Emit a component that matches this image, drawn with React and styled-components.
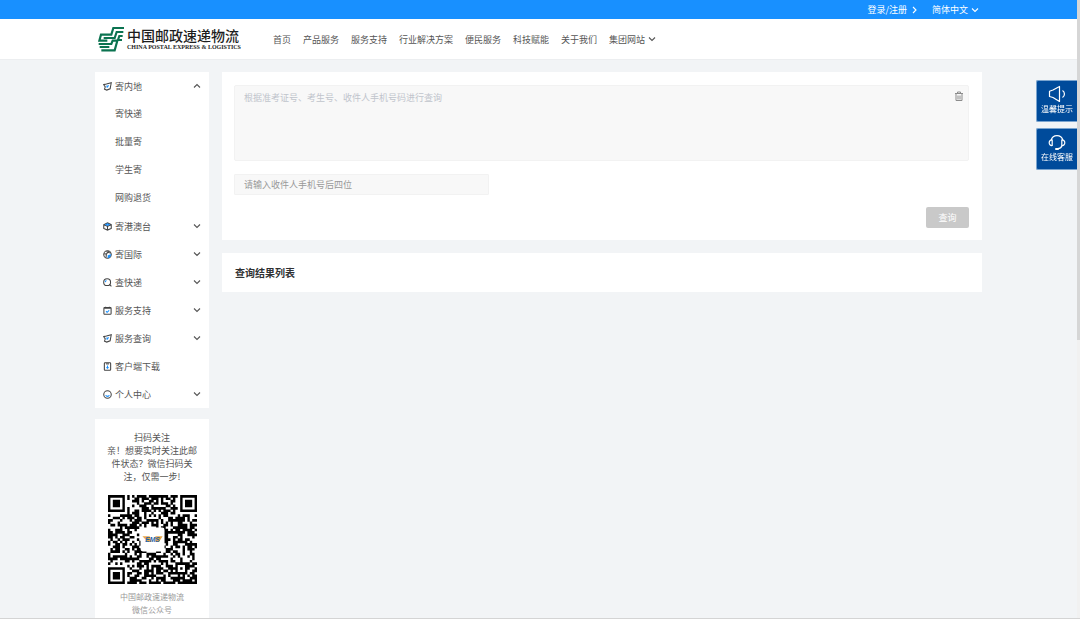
import React, { useState } from "react";
import styled, { createGlobalStyle } from "styled-components";

const GlobalStyle = createGlobalStyle`
    * {
        box-sizing: border-box;
    }

    body {
        margin: 0;
        background-color: #f2f4f6;
        color: #555;
        font-family: "Noto Sans CJK SC", "Liberation Sans", sans-serif;
        font-size: 9px;
        overflow: hidden;
    }

    a {
        color: inherit;
        text-decoration: none;
    }

    button, input, textarea {
        font-family: inherit;
        font-size: 9px;
        margin: 0;
        padding: 0;
        border: none;
    }

    ul {
        list-style: none;
        margin: 0;
        padding: 0;
    }
`;

const Page = styled.div`
    height: 100vh;
    padding-right: 3px;
    overflow: hidden;
`;

const TopBar = styled.div`
    display: flex;
    justify-content: flex-end;
    align-items: center;
    gap: 14px;
    height: 19px;
    padding: 0 98px;
    background-color: #1890ff;
    color: #fff;
`;

const TopLink = styled.a`
    display: flex;
    align-items: center;
    gap: 3px;
`;

const LangButton = styled.button`
    display: flex;
    align-items: center;
    gap: 3px;
    background: none;
    color: #fff;
`;

const Header = styled.header`
    display: flex;
    align-items: center;
    height: 41px;
    padding: 0 98px;
    background-color: #fff;
    border-bottom: 1px solid #eceef0;
`;

const Brand = styled.a`
    display: flex;
    align-items: center;
    gap: 3px;
    width: 175px;
`;

const BrandText = styled.span`
    display: flex;
    flex-direction: column;
    color: #1d1d1d;
    white-space: nowrap;
`;

const BrandName = styled.span`
    display: flex;
    justify-content: space-between;
    font-size: 14px;
    font-weight: 500;
    line-height: 17px;
`;

const BrandSub = styled.span`
    font-family: "Liberation Serif", serif;
    font-size: 6px;
    font-weight: bold;
    line-height: 7px;
`;

const Nav = styled.nav`
    display: flex;
    gap: 12px;
`;

const NavLink = styled.a`
    display: flex;
    align-items: center;
    gap: 3px;
    white-space: nowrap;
`;

const Content = styled.div`
    display: flex;
    align-items: flex-start;
    gap: 13px;
    padding: 12px 95px;
`;

const Sidebar = styled.aside`
    display: flex;
    flex-direction: column;
    flex: 0 0 114px;
    gap: 11px;
`;

const Card = styled.section`
    background-color: #fff;
`;

const MenuRow = styled.button`
    display: flex;
    align-items: center;
    gap: 3px;
    width: 100%;
    height: 28px;
    padding: 0 8px;
    background: none;
    color: #555;
    text-align: left;
`;

const MenuLabel = styled.span`
    flex: 1;
`;

const SubLink = styled.a`
    display: block;
    height: 28px;
    padding-left: 20px;
    line-height: 28px;
`;

const ScanCard = styled(Card)`
    display: flex;
    flex-direction: column;
    align-items: center;
    padding: 12px;
    text-align: center;
`;

const ScanText = styled.p`
    margin: 0 0 12px;
    line-height: 13px;
`;

const ScanCaption = styled.p`
    margin: 6px 0 0;
    color: #999;
    font-size: 8px;
    line-height: 13px;
`;

const Main = styled.main`
    display: flex;
    flex-direction: column;
    flex: 1;
    gap: 13px;
    min-width: 0;
`;

const SearchForm = styled.form`
    display: flex;
    flex-direction: column;
    align-items: flex-start;
    padding: 13px 13px 12px 12px;
    background-color: #fff;
`;

const NumberBox = styled.div`
    display: flex;
    align-items: flex-start;
    width: 100%;
    height: 76px;
    padding: 5px 4px 5px 9px;
    background-color: #f8f8f8;
    border: 1px solid #f2f2f2;
    border-radius: 2px;
`;

const NumberArea = styled.textarea`
    flex: 1;
    height: 100%;
    background: none;
    outline: none;
    resize: none;
    line-height: 14px;

    &::placeholder {
        color: #c0c4cc;
    }
`;

const ClearButton = styled.button`
    display: flex;
    background: none;
    color: #8c8c8c;
`;

const PhoneInput = styled.input`
    width: 255px;
    height: 21px;
    margin: 13px 0 12px;
    padding: 0 9px;
    background-color: #f8f8f8;
    border: 1px solid #f2f2f2;
    border-radius: 1px;
    outline: none;

    &::placeholder {
        color: #999;
    }
`;

const QueryButton = styled.button`
    align-self: flex-end;
    width: 43px;
    height: 21px;
    border-radius: 2px;
    background-color: #c9c9c9;
    color: #fff;
`;

const ResultTitle = styled.h2`
    margin: 0;
    padding: 0 13px;
    color: #303133;
    font-size: 10px;
    font-weight: bold;
    line-height: 39px;
`;

const FloatBar = styled.div`
    position: fixed;
    top: 80px;
    right: 3px;
    display: flex;
    flex-direction: column;
    gap: 6px;
`;

const FloatButton = styled.button`
    display: flex;
    flex-direction: column;
    align-items: center;
    width: 41px;
    height: 42px;
    padding-top: 4px;
    background-color: #004b9b;
    border: 1px solid #7aa4cf;
    border-right: none;
    border-radius: 2px 0 0 2px;
    color: #fff;
    font-size: 8px;
    line-height: 12px;
`;

const ScrollRail = styled.div`
    position: fixed;
    top: 0;
    right: 0;
    bottom: 0;
    width: 3px;
    background-color: #f1f1f1;
`;

const ScrollThumb = styled.div`
    height: 55%;
    background-color: #d6d6d6;
`;

const BottomEdge = styled.div`
    position: fixed;
    left: 0;
    right: 0;
    bottom: 0;
    height: 1px;
    background-color: #d4d4d4;
`;

const arrows = {
    down: "M1 2.500l3 3 3-3",
    up: "M1 5.500l3-3 3 3",
    right: "M3 1l3 3-3 3",
};

const Arrow = ({ to }) => (
    <svg width="8" height="8" viewBox="0 0 8 8" fill="none" stroke="currentColor" strokeWidth="1.1">
        <path d={arrows[to]} />
    </svg>
);

const iconShapes = {
    send: (
        <>
            <path d="M1 3.500L4.500 2.800 11 1 9.500 9 5 10.800 2 9.500 3 6.500z" />
            <path stroke="#1890ff" d="M5 7.500L7.500 4.500M4.500 5.500h1.500" />
        </>
    ),
    box: (
        <>
            <path d="M1 3.500L6 1.200l5 2.300v5L6 10.800 1 8.500zM6 6v4.800M1 3.500L6 5.800l5-2.300" />
            <path stroke="#1890ff" d="M3.800 3.400L6 2.400l2.200 1L6 4.500z" />
        </>
    ),
    globe: (
        <>
            <circle cx="6" cy="6" r="5" />
            <path d="M1.500 5l3 .5 1.500-2 -1-2M4.500 5.500L4 10M7 1.500l.5 2 3 .5" />
            <path stroke="#1890ff" fill="#1890ff" d="M7 7.500l3-1-1 2.500-2 1z" />
        </>
    ),
    search: (
        <>
            <circle cx="5.500" cy="5.500" r="4.600" />
            <path d="M8.600 8.600l2.600 2.600" />
            <path stroke="#1890ff" d="M3 5.500a2.400 2.400 0 0 1 1.600-2.200" />
        </>
    ),
    support: (
        <>
            <rect x="1.200" y="2" width="9.600" height="9" rx="1" />
            <path d="M1.500 2.800h9M3.500 1v2M8.500 1v2" />
            <path stroke="#1890ff" d="M4 7l1.500 1.400L8.200 5.700" />
        </>
    ),
    phone: (
        <>
            <rect x="1.800" y="1" width="8.400" height="10" rx="1" />
            <path d="M4 2.500h4" />
            <path stroke="#1890ff" d="M6 4.500v4M4.500 7L6 8.500 7.500 7" />
        </>
    ),
    user: (
        <>
            <circle cx="6" cy="6" r="5" />
            <path stroke="#1890ff" d="M3.500 7c.8 2 4.200 2 5 0" />
        </>
    ),
};

const MenuIcon = ({ name }) => (
    <svg width="9" height="9" viewBox="0 0 12 12" fill="none" stroke="#444" strokeWidth="1.400">
        {iconShapes[name]}
    </svg>
);

const Logo = () => (
    <svg width="26" height="26" viewBox="0 0 78 78" fill="none" stroke="#0b7350" strokeWidth="6.500">
        <path d="M79 6H46L40 26H9L4 44h24" />
        <path d="M76 18H56L50 36H17" />
        <path d="M74 30H64L60 42h12" />
        <path d="M2 54h38l4-10h14" />
        <path d="M5 63h29M58 44L50 73H10" />
    </svg>
);

const QR_SIZE = 37;

const isFinder = (x, y) => {
    const spots = [[0, 0], [QR_SIZE - 7, 0], [0, QR_SIZE - 7]];
    for (const [fx, fy] of spots) {
        const dx = Math.abs(x - fx - 3);
        const dy = Math.abs(y - fy - 3);
        const ring = Math.max(dx, dy);
        if (ring <= 4) return ring === 3 || ring <= 1 ? 1 : 0;
    }
    const align = Math.max(Math.abs(x - 30), Math.abs(y - 30));
    if (align <= 2) return align === 1 ? 0 : 1;
    return -1;
};

const buildQr = () => {
    let seed = 2018;
    let d = "";
    for (let y = 0; y < QR_SIZE; y++) {
        let run = 0;
        for (let x = 0; x <= QR_SIZE; x++) {
            seed = (seed * 16807) % 2147483647;
            const fixed = isFinder(x, y);
            const dark = x < QR_SIZE && (fixed === -1 ? seed / 2147483647 > 0.46 : fixed === 1);
            if (dark) {
                run++;
            } else if (run) {
                d += `M${x - run} ${y}h${run}v1.1h-${run}z`;
                run = 0;
            }
        }
    }
    return d;
};

const qrPath = buildQr();

const QrCode = () => (
    <svg width="89" height="89" viewBox="0 0 37 37" role="img" aria-label="微信公众号二维码">
        <path d={qrPath} fill="#000" />
        <rect x="13.500" y="13.500" width="10" height="10" rx="1" fill="#fff" />
        <path d="M14.300 17.200h3l.8 2.300h-1.500zM19.700 17.200h3l-1.500 2.300h-1.500z" fill="#e9a648" />
        <text x="18.500" y="19.600" textAnchor="middle" fontFamily="Liberation Sans, sans-serif" fontSize="2.800" fontWeight="bold" fontStyle="italic" fill="#1f5fa8">EMS</text>
    </svg>
);

const TrashIcon = () => (
    <svg width="10" height="11" viewBox="0 0 10 11" fill="none" stroke="currentColor">
        <path d="M1 2.500h8M3.500 2V1h3v1M2 3v6.500h6V3M4 4.500v4M6 4.500v4" />
    </svg>
);

const SpeakerIcon = () => (
    <svg width="18" height="18" viewBox="0 0 18 18" fill="none" stroke="currentColor" strokeWidth="1.200" strokeLinejoin="round">
        <path d="M1.500 6.200L5 5l6.500-3.500v15L5 12.500l-3.500-1zM14.500 5.500c2.600 1.500 2.600 5.500 0 7" />
    </svg>
);

const HeadsetIcon = () => (
    <svg width="18" height="18" viewBox="0 0 18 18" fill="none" stroke="currentColor" strokeWidth="1.200" strokeLinecap="round">
        <path d="M3.200 7a6 6 0 0 1 11.600 0M4.200 7v5.500c-4 .5-4-6 0-5.500zM13.800 7v5.500c4 .5 4-6 0-5.500zM14 12.500c-.5 2-2 3-4 3.200" />
        <path strokeWidth="2" d="M8 16h2" />
    </svg>
);

const navItems = ["首页", "产品服务", "服务支持", "行业解决方案", "便民服务", "科技赋能", "关于我们", "集团网站"];

const menuItems = [
    { label: "寄内地", icon: "send", children: ["寄快递", "批量寄", "学生寄", "网购退货"] },
    { label: "寄港澳台", icon: "box", children: [] },
    { label: "寄国际", icon: "globe", children: [] },
    { label: "查快递", icon: "search", children: [] },
    { label: "服务支持", icon: "support", children: [] },
    { label: "服务查询", icon: "send", children: [] },
    { label: "客户端下载", icon: "phone" },
    { label: "个人中心", icon: "user", children: [] },
];

const SideMenu = () => {
    const [open, setOpen] = useState("寄内地");

    return (
        <Card as="nav">
            <ul>
                {menuItems.map((item) => (
                    <li key={item.label}>
                        <MenuRow type="button" onClick={() => setOpen(open === item.label ? "" : item.label)}>
                            <MenuIcon name={item.icon} />
                            <MenuLabel>{item.label}</MenuLabel>
                            {item.children && <Arrow to={open === item.label ? "up" : "down"} />}
                        </MenuRow>
                        {open === item.label && item.children && (
                            <ul>
                                {item.children.map((child) => (
                                    <li key={child}>
                                        <SubLink href="#">{child}</SubLink>
                                    </li>
                                ))}
                            </ul>
                        )}
                    </li>
                ))}
            </ul>
        </Card>
    );
};

const App = () => {
    const [numbers, setNumbers] = useState("");
    const [phone, setPhone] = useState("");

    return (
        <>
            <GlobalStyle />
            <Page>
                <TopBar>
                    <TopLink href="#">登录/注册 <Arrow to="right" /></TopLink>
                    <LangButton type="button">简体中文 <Arrow to="down" /></LangButton>
                </TopBar>
                <Header>
                    <Brand href="#">
                        <Logo />
                        <BrandText>
                            <BrandName>中国邮政速递物流</BrandName>
                            <BrandSub>CHINA POSTAL EXPRESS &amp; LOGISTICS</BrandSub>
                        </BrandText>
                    </Brand>
                    <Nav>
                        {navItems.map((item) => (
                            <NavLink href="#" key={item}>
                                {item}
                                {item === "集团网站" && <Arrow to="down" />}
                            </NavLink>
                        ))}
                    </Nav>
                </Header>
                <Content>
                    <Sidebar>
                        <SideMenu />
                        <ScanCard>
                            <ScanText>
                                扫码关注<br />
                                亲！想要实时关注此邮件状态？微信扫码关注，仅需一步!
                            </ScanText>
                            <QrCode />
                            <ScanCaption>
                                中国邮政速递物流<br />
                                微信公众号
                            </ScanCaption>
                        </ScanCard>
                    </Sidebar>
                    <Main>
                        <SearchForm onSubmit={(e) => e.preventDefault()}>
                            <NumberBox>
                                <NumberArea
                                    aria-label="查询号码"
                                    placeholder="根据准考证号、考生号、收件人手机号码进行查询"
                                    value={numbers}
                                    onChange={(e) => setNumbers(e.target.value)}
                                />
                                <ClearButton type="button" aria-label="清空" onClick={() => setNumbers("")}>
                                    <TrashIcon />
                                </ClearButton>
                            </NumberBox>
                            <PhoneInput
                                aria-label="收件人手机号后四位"
                                placeholder="请输入收件人手机号后四位"
                                value={phone}
                                onChange={(e) => setPhone(e.target.value)}
                            />
                            <QueryButton type="submit">查询</QueryButton>
                        </SearchForm>
                        <Card>
                            <ResultTitle>查询结果列表</ResultTitle>
                        </Card>
                    </Main>
                </Content>
            </Page>
            <FloatBar>
                <FloatButton type="button"><SpeakerIcon />温馨提示</FloatButton>
                <FloatButton type="button"><HeadsetIcon />在线客服</FloatButton>
            </FloatBar>
            <ScrollRail>
                <ScrollThumb />
            </ScrollRail>
            <BottomEdge />
        </>
    );
};

export default App;
